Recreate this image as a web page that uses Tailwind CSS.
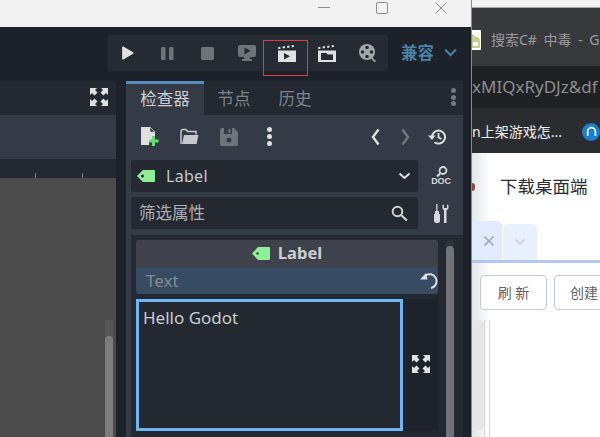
<!doctype html>
<html>
<head>
<meta charset="utf-8">
<script src="https://cdn.jsdelivr.net/npm/@tailwindcss/browser@4"></script>
</head>
<body class="m-0 overflow-hidden">
<div class="relative flex h-[437px] w-[600px] overflow-hidden bg-white font-['Noto_Sans','Noto_Sans_CJK_SC',sans-serif]">

  <!-- Godot window -->
  <div class="flex h-full w-[471px] shrink-0 flex-col bg-[#1d2129]">
    <div class="flex h-[27px] shrink-0 items-start bg-[#f2f2f2] pl-[318px] pt-[2px]">
      <svg class="mt-[5px] h-[1px] w-[12px]" viewBox="0 0 12 1"><rect width="12" height="1" fill="#8d8d8d"/></svg>
      <svg class="ml-[46px] h-[12px] w-[12px]" viewBox="0 0 12 12"><rect x=".5" y=".5" width="11" height="11" rx="1.5" fill="none" stroke="#8d8d8d"/></svg>
      <svg class="ml-[47px] h-[12px] w-[12px]" viewBox="0 0 12 12"><path d="M.5.5l11 11M11.5.5l-11 11" stroke="#8d8d8d" fill="none"/></svg>
    </div>

    <!-- top toolbar -->
    <div class="flex h-[54px] shrink-0 items-start pl-[107px] pt-[8px]">
      <div class="flex h-[36px] w-[281px] items-center rounded-[3px] bg-[#252a33]">
        <div class="flex w-10 justify-center"><svg class="h-[14px] w-[13px]" viewBox="0 0 12 13"><path d="M1 1.2v10.6c0 .8.7 1 1.2.7l9-5.3c.5-.3.5-1.1 0-1.4l-9-5.3C1.700.2 1 .4 1 1.200z" fill="#e0e0e0"/></svg></div>
        <div class="flex w-10 justify-center"><svg class="h-[13px] w-[13px]" viewBox="0 0 13 13"><rect x="0" y="0" width="4.500" height="13" rx="1.200" fill="#6f737a"/><rect x="8" y="0" width="4.500" height="13" rx="1.200" fill="#6f737a"/></svg></div>
        <div class="flex w-10 justify-center"><svg class="h-[13px] w-[13px]" viewBox="0 0 13 13"><rect width="13" height="13" rx="1.500" fill="#6f737a"/></svg></div>
        <div class="flex w-10 justify-center"><svg class="h-[16px] w-[18px]" viewBox="0 0 18 16"><path d="M2 0h14a2 2 0 0 1 2 2v8a2 2 0 0 1-2 2h-4v2h2v2H4v-2h2v-2H2a2 2 0 0 1-2-2V2a2 2 0 0 1 2-2z" fill="#6f737a"/><path d="M6.500 2.500v7l6-3.500z" fill="#252a33"/></svg></div>
        <div class="flex w-10 justify-center"><svg class="h-[17px] w-[18px]" viewBox="0 0 18 17"><path d="M0 5.500h18V17H0z" fill="#e0e0e0"/><path d="M0 2.200l2.200-.4.400 2-2.200.4zM4.500 1.500l2.300-.4.300 2-2.200.4zM9 .9l2.200-.4.400 2-2.200.4zM13.500.3l2.200-.3.300 2-2.200.3z" fill="#e0e0e0"/><path d="M6 8v6.500l6-3.200z" fill="#252a33"/></svg></div>
        <div class="flex w-10 justify-center"><svg class="h-[17px] w-[18px]" viewBox="0 0 18 17"><path d="M0 5.500h18V17H0z" fill="#e0e0e0"/><path d="M0 2.200l2.200-.4.400 2-2.200.4zM4.500 1.500l2.300-.4.300 2-2.200.4zM9 .9l2.200-.4.400 2-2.200.4zM13.500.3l2.200-.3.300 2-2.200.3z" fill="#e0e0e0"/><path d="M3 8h5.500l1 1.500H15V15H3z" fill="#252a33"/></svg></div>
        <div class="flex w-10 justify-center"><svg class="h-[18px] w-[17px]" viewBox="0 0 17 18"><circle cx="8" cy="8" r="8" fill="#a5a7ab"/><circle cx="8" cy="3.500" r="1.800" fill="#252a33"/><circle cx="8" cy="12.500" r="1.800" fill="#252a33"/><circle cx="3.500" cy="8" r="1.800" fill="#252a33"/><circle cx="12.500" cy="8" r="1.800" fill="#252a33"/><path d="M13 14c1 1.500 2 2.800 3.500 3.500" stroke="#a5a7ab" stroke-width="1.800" fill="none"/></svg></div>
      </div>
      <span class="ml-[13px] text-[16.500px] leading-[36px] font-semibold text-[#4a82a8]">兼容</span>
      <svg class="ml-[10px] mt-[13px] h-[9px] w-[13px]" viewBox="0 0 13 9"><path d="M1 1.500l5.500 5.500L12 1.500" fill="none" stroke="#4a82a8" stroke-width="2"/></svg>
    </div>

    <!-- panels -->
    <div class="flex min-h-0 flex-1">
      <!-- viewport -->
      <div class="flex w-[116px] shrink-0 flex-col">
        <div class="flex h-[34px] shrink-0 items-start justify-end rounded-tr-[3px] bg-[#232831] pr-[8px] pt-[7px]">
          <svg class="h-[18px] w-[18px]" viewBox="0 0 18 18" fill="#e0e0e0"><path d="M0 0h7L5 2l2.500 2.500-3 3L2 5 0 7zM18 0h-7l2 2-2.500 2.500 3 3L16 5l2 2zM0 18h7l-2-2 2.500-2.500-3-3L2 13l-2-2zM18 18h-7l2-2-2.500-2.500 3-3L16 13l2-2z"/></svg>
        </div>
        <div class="h-[44px] shrink-0 bg-[#343a46]"></div>
        <div class="flex h-[19px] shrink-0 items-end bg-[#232831] pl-[35px]">
          <span class="h-[5px] w-[1px] bg-[#7c7f85]"></span>
          <span class="ml-[46px] h-[5px] w-[1px] bg-[#7c7f85]"></span>
        </div>
        <div class="flex min-h-0 flex-1 justify-end bg-[#4b4b4b] pr-[3px] pt-[142px]">
          <div class="flex w-[8px] flex-col bg-[#565656]">
            <div class="mt-[16px] flex-1 rounded-t-[4px] bg-[#7d7d7d]"></div>
          </div>
        </div>
      </div>

      <!-- inspector -->
      <div class="ml-[10px] flex w-[337px] shrink-0 flex-col bg-[#343a46]">
        <div class="flex h-[34px] shrink-0 bg-[#232831] text-[16.500px]">
          <div class="flex w-[78px] items-center justify-center border-t-[3px] border-[#568dbf] bg-[#343a46] pb-[1px] text-[#cfd0d3]">检查器</div>
          <div class="flex w-[60px] items-center justify-center pt-[2px] text-[#7f838a]">节点</div>
          <div class="flex w-[62px] items-center justify-center pt-[2px] text-[#7f838a]">历史</div>
          <div class="ml-auto mr-[7px] mt-[7px] flex h-[18px] flex-col justify-between">
            <span class="size-[5px] rounded-full bg-[#767a81]"></span><span class="size-[5px] rounded-full bg-[#767a81]"></span><span class="size-[5px] rounded-full bg-[#767a81]"></span>
          </div>
        </div>

        <!-- tool row -->
        <div class="flex h-[45px] shrink-0 items-center pb-[2px] pl-[15px]">
          <svg class="h-[19px] w-[18px]" viewBox="0 0 18 19"><path d="M0 0h9l5 5v6h-3v3H8v4H0z" fill="#e0e0e0"/><path d="M9 0v5h5z" fill="#343a46" stroke="#e0e0e0" stroke-width=".6"/><path d="M11 9h3v3.500h3.500v3H14V19h-3v-3.500H8v-3h3z" fill="#5fe06e"/></svg>
          <svg class="ml-[21px] h-[17px] w-[19px]" viewBox="0 0 19 17"><path d="M1 16V3.500C1 2 1.500 1.500 3 1.500h3l1.500 2H16v3" fill="none" stroke="#c9cacc" stroke-width="1.500"/><path d="M4 7h14.500L16.500 16H2z" fill="#c9cacc"/></svg>
          <svg class="ml-[21px] h-[18px] w-[18px]" viewBox="0 0 18 18"><path d="M2 0h12l4 4v12a2 2 0 0 1-2 2H2a2 2 0 0 1-2-2V2a2 2 0 0 1 2-2z" fill="#6f737a"/><rect x="4" y="0" width="8" height="6" fill="#343a46"/><rect x="8.500" y="1" width="2" height="4" fill="#6f737a"/><circle cx="9" cy="12" r="2.500" fill="#343a46"/></svg>
          <div class="ml-[29px] flex h-[19px] flex-col justify-between">
            <span class="size-[5px] rounded-full bg-[#e0e0e0]"></span><span class="size-[5px] rounded-full bg-[#e0e0e0]"></span><span class="size-[5px] rounded-full bg-[#e0e0e0]"></span>
          </div>
          <svg class="ml-[99px] h-[18px] w-[9px]" viewBox="0 0 9 18"><path d="M7.500 1.500L2 9l5.500 7.500" fill="none" stroke="#e0e0e0" stroke-width="2.400"/></svg>
          <svg class="ml-[21px] h-[18px] w-[9px]" viewBox="0 0 9 18"><path d="M1.500 1.500L7 9l-5.500 7.500" fill="none" stroke="#73777e" stroke-width="2.400"/></svg>
          <svg class="ml-[18px] h-[16px] w-[18px]" viewBox="0 0 18 16"><path d="M4 8a6.500 6.500 0 1 1 2.500 5.200" fill="none" stroke="#e0e0e0" stroke-width="2"/><path d="M0 6.500h7.500L4 11z" fill="#e0e0e0"/><path d="M10.500 4v4.500l3 1.500" fill="none" stroke="#e0e0e0" stroke-width="1.800"/></svg>
        </div>

        <!-- Label select row -->
        <div class="flex h-[32px] shrink-0 items-center">
          <div class="ml-[5px] flex h-[32px] w-[287px] items-center rounded-[2px] bg-[#232831] pl-[6px] pr-[7px]">
            <svg class="h-[14px] w-[18px]" viewBox="0 0 18 14"><path d="M6 1h11a1 1 0 0 1 1 1v10a1 1 0 0 1-1 1H6L0 7z" fill="#8eef97"/><circle cx="5.500" cy="7" r="1.500" fill="#232831"/></svg>
            <span class="ml-[11px] text-[16px] leading-none tracking-[.3px] text-[#c7c9cb]">Label</span>
            <svg class="ml-auto h-[8px] w-[13px]" viewBox="0 0 13 8"><path d="M1.500 1.500l5 4.500 5-4.500" fill="none" stroke="#e0e0e0" stroke-width="2"/></svg>
          </div>
          <div class="ml-[13px] flex h-[20px] w-[20px] flex-col items-center">
            <svg class="h-[11px] w-[20px] shrink-0" viewBox="0 0 20 11"><circle cx="12" cy="4.500" r="3.500" fill="none" stroke="#d8d9db" stroke-width="1.800"/><path d="M9 7.500L6 10.500" stroke="#d8d9db" stroke-width="2.200"/></svg>
            <span class="text-[9px] leading-[9px] font-black tracking-[-.2px] text-[#d8d9db] font-['Liberation_Sans',sans-serif]">DOC</span>
          </div>
        </div>

        <!-- Filter row -->
        <div class="mt-[5px] flex h-[32px] shrink-0 items-center">
          <div class="ml-[5px] flex h-[32px] w-[287px] items-center rounded-[2px] bg-[#232831] pl-[8px] pr-[10px]">
            <span class="text-[16.500px] leading-none text-[#aeb0b3]">筛选属性</span>
            <svg class="ml-auto h-[16px] w-[17px]" viewBox="0 0 17 16"><circle cx="6.500" cy="6.500" r="4.800" fill="none" stroke="#d0d1d3" stroke-width="2"/><path d="M10 10l6 5.500" stroke="#d0d1d3" stroke-width="2.200"/></svg>
          </div>
          <svg class="ml-[15px] h-[19px] w-[16px]" viewBox="0 0 16 19" fill="#d8d9db"><path d="M3.200 0h1.300v7H6v3h1v6.500a2.500 2.500 0 0 1-2.500 2.500h-1A2.500 2.500 0 0 1 1 16.500V10h1V7h1.200z"/><path d="M9.500 1v3.500l1.500 2V19h2.500V6.500l2-2V1l-1.500-.500V4h-3V.500z"/></svg>
        </div>

        <!-- property list -->
        <div class="ml-[5px] mt-[6px] flex min-h-0 flex-1 bg-[#232831] pl-[5px] pt-[5px]">
          <div class="flex w-[302px] shrink-0 flex-col">
            <div class="flex h-[27px] shrink-0 items-center justify-center rounded-t-[2px] bg-[#3f424a]">
              <svg class="h-[13px] w-[18px]" viewBox="0 0 18 13"><path d="M6 0h11a1 1 0 0 1 1 1v11a1 1 0 0 1-1 1H6L0 6.500z" fill="#8eef97"/><circle cx="5.500" cy="6.500" r="1.300" fill="#3f424a"/></svg>
              <span class="ml-[8px] text-[16.500px] leading-none font-bold text-[#cdced0]">Label</span>
            </div>
            <div class="flex h-[27px] shrink-0 items-center rounded-b-[2px] bg-[#374b63] pl-[10px]">
              <span class="text-[17px] leading-none text-[#868b92]">Text</span>
              <svg class="ml-auto h-[18px] w-[18px]" viewBox="0 0 18 18"><path d="M5 3.800A7 7 0 1 1 11 16" fill="none" stroke="#e0e0e0" stroke-width="2"/><path d="M0 7.500h7.500L6 1z" fill="#e0e0e0"/></svg>
            </div>
            <div class="mt-[5px] flex h-[132px] shrink-0 bg-[#1e222a]">
              <div class="w-[267px] border-[3px] border-[#6cb6f8] bg-[#232831] pl-[4px] pt-[2px] text-[17px] leading-[27px] text-[#cbcccf]">Hello Godot</div>
              <div class="flex flex-1 items-center justify-center pb-[2px] pl-[1px]">
                <svg class="h-[18px] w-[18px]" viewBox="0 0 18 18" fill="#e0e0e0"><path d="M0 0h7L5 2l2.500 2.500-3 3L2 5 0 7zM18 0h-7l2 2-2.500 2.500 3 3L16 5l2 2zM0 18h7l-2-2 2.500-2.500-3-3L2 13l-2-2zM18 18h-7l2-2-2.500-2.500 3-3L16 13l2-2z"/></svg>
              </div>
            </div>
          </div>
          <div class="ml-[8px] flex w-[8px] shrink-0 flex-col rounded-t-[4px] bg-[#2d323b] pt-[6px]">
            <div class="flex-1 rounded-t-[4px] bg-[#707379]"></div>
          </div>
        </div>
      </div>
    </div>
  </div>

  <div class="h-full w-[1px] shrink-0 bg-[#8a8a8a]"></div>

  <!-- Browser -->
  <div class="flex h-full min-w-0 flex-1 flex-col overflow-hidden">
    <div class="h-[7px] shrink-0 bg-[#f2f2f2]"></div>
    <div class="h-[1px] shrink-0 bg-[#a8a8a8]"></div>
    <div class="flex h-[58px] shrink-0 items-start bg-[#37393d] pt-[22px]">
      <svg class="h-[20px] w-[9px] shrink-0" viewBox="0 0 9 20"><rect width="9" height="20" fill="#fff"/><path d="M0 5l6 4H0zM0 11h7v6H0z" fill="none" stroke="#a9c46c" stroke-width="1.500"/></svg>
      <span class="ml-[10px] text-[14px] leading-[20px] whitespace-nowrap [word-spacing:3px] text-[#9b9c9e]">搜索C# 中毒 - G</span>
    </div>
    <div class="flex h-[42px] shrink-0 items-center bg-[#202124] text-[17px] whitespace-nowrap text-[#8c8e91]">xMIQxRyDJz&amp;df</div>
    <div class="flex h-[45px] shrink-0 items-center bg-[#2b2c2f] pt-[2px] text-[14px] whitespace-nowrap text-[#eeeeee]">
      <span class="flex-1">n上架游戏怎...</span>
      <span class="flex size-[18px] items-center justify-center rounded-full bg-[#1a7fd0]">
        <svg class="h-[11px] w-[11px]" viewBox="0 0 10 10"><path d="M1.500 9V5a3.500 3.500 0 0 1 7 0v4" fill="none" stroke="#fff" stroke-width="1.500"/></svg>
      </span>
    </div>
    <div class="flex min-h-0 flex-1 flex-col bg-[linear-gradient(to_right,#e3e5e8_0,#ffffff_18px)]">
      <div class="flex h-[68px] shrink-0 items-center pb-[1px] text-[17.500px] whitespace-nowrap text-[#2b2b33]">
        <span class="h-[8px] w-[3px] rounded-r-full bg-[#8a4b3c]"></span>
        <span class="ml-[25px]">下载桌面端</span>
      </div>
      <div class="flex h-[39px] shrink-0 items-end">
        <div class="flex h-[39px] w-[30px] items-center justify-end rounded-tr-[5px] bg-[#e2ebfb] pr-[8px]">
          <svg class="h-[10px] w-[10px]" viewBox="0 0 10 10"><path d="M.5.500l9 9M9.500.500l-9 9" stroke="#a3abb8" stroke-width="1.600"/></svg>
        </div>
        <div class="ml-[1px] flex h-[36px] w-[34px] items-center justify-center rounded-t-[5px] bg-[#e8f0fe]">
          <svg class="h-[6px] w-[10px]" viewBox="0 0 10 6"><path d="M.5.500L5 5 9.500.500" fill="none" stroke="#c0c8d6" stroke-width="1.300"/></svg>
        </div>
      </div>
      <div class="h-[3px] shrink-0 bg-[#b1c8f0]"></div>
      <div class="mt-[12px] flex shrink-0 pl-[8px] text-[14px] whitespace-nowrap text-[#5f6166]">
        <div class="flex h-[35px] w-[67px] shrink-0 items-center justify-center rounded-[4px] border border-[#c6c9cf] bg-white">刷 新</div>
        <div class="ml-[7px] flex h-[35px] w-[67px] shrink-0 items-center justify-start rounded-[4px] border border-[#c6c9cf] bg-white pl-[15px]">创建</div>
      </div>
      <div class="mt-[10px] flex min-h-0 flex-1 pl-[2px]">
        <div class="h-[110px] w-[10px] rounded-[4px] bg-[#e6e6e6]"></div>
        <div class="h-full w-[6px] border-x border-[#d4d6da]"></div>
      </div>
    </div>
  </div>

  <!-- highlighted annotation box -->
  <div class="absolute left-[263px] top-[40px] h-[36px] w-[45px] border border-[#e5383b]"></div>
</div>
</body>
</html>
